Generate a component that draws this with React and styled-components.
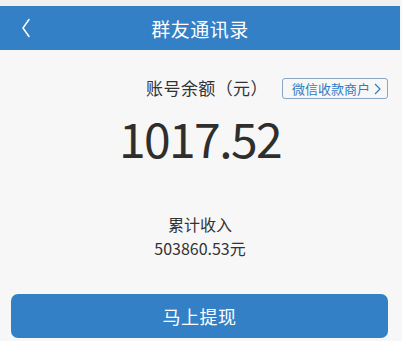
import React from 'react'
import styled, { createGlobalStyle } from 'styled-components'

const GlobalStyle = createGlobalStyle`
  body {
    margin: 0;
    background: #f7f7f7;
    font-family: "Noto Sans CJK SC", "Noto Sans", sans-serif;
  }
`

const Page = styled.div`
  width: 400px;
  height: 341px;
  background: #f7f7f7;
  border-top: 6px solid #efefef;
  box-sizing: border-box;
  display: flex;
  flex-direction: column;
`

const Header = styled.div`
  height: 44px;
  background: #3380c7;
  display: grid;
  grid-template-columns: 44px 1fr 44px;
  align-items: center;
  color: #fff;
`

const Back = styled.div`
  display: flex;
  align-items: center;
  justify-content: center;
  padding-left: 8px;
`

const Title = styled.div`
  text-align: center;
  font-size: 19px;
  letter-spacing: 0.5px;
`

const TitleRow = styled.div`
  margin-top: 28px;
  display: grid;
  grid-template-columns: 1fr auto 1fr;
  align-items: center;
  padding: 0 12px 0 26px;
`

const Label = styled.div`
  grid-column: 2;
  font-size: ${p => p.size || 17}px;
  color: #333;
  text-align: center;
  line-height: 1.2;
  letter-spacing: 0.4px;
`

const Merchant = styled.div`
  justify-self: end;
  display: flex;
  align-items: center;
  gap: 4px;
  height: 21px;
  padding: 0 6px 0 9px;
  border: 1px solid #8aa5bf;
  border-radius: 3px;
  color: #2f7cc4;
  font-size: 13px;
  box-sizing: border-box;
`

const Amount = styled.div`
  margin-top: 10px;
  text-align: center;
  font-size: 48px;
  color: #2e2e2e;
  line-height: 56px;
  letter-spacing: -1.6px;
`

const Summary = styled.div`
  margin-top: 48px;
  display: flex;
  flex-direction: column;
  align-items: center;
  gap: 2px;
  color: #333;
`

const Total = styled.div`
  font-size: 16px;
  line-height: 22px;
`

const WithdrawButton = styled.button`
  margin: auto 12px 3px 11px;
  height: 44px;
  border: none;
  border-radius: 7px;
  background: #3380c7;
  color: #fff;
  font-family: inherit;
  font-size: 18px;
  letter-spacing: 0.5px;
`

const Chevron = ({ color, size, weight }) => (
  <svg width={size} height={size * 2} viewBox="0 0 10 20" fill="none">
    <path d="M8 1.5 L2 10 L8 18.5" stroke={color} strokeWidth={weight} strokeLinecap="round" strokeLinejoin="round" />
  </svg>
)

const App = () => (
  <>
    <GlobalStyle />
    <Page>
      <Header>
        <Back>
          <Chevron color="#fff" size={10} weight={1.5} />
        </Back>
        <Title>群友通讯录</Title>
        <div />
      </Header>

      <TitleRow>
        <Label>账号余额（元）</Label>
        <Merchant>
          微信收款商户
          <svg width="7" height="12" viewBox="0 0 7 12" fill="none">
            <path d="M1 1 L6 6 L1 11" stroke="#2f7cc4" strokeWidth="1.2" />
          </svg>
        </Merchant>
      </TitleRow>

      <Amount>1017.52</Amount>

      <Summary>
        <Total>累计收入</Total>
        <Total>503860.53元</Total>
      </Summary>

      <WithdrawButton>马上提现</WithdrawButton>
    </Page>
  </>
)

export default App
